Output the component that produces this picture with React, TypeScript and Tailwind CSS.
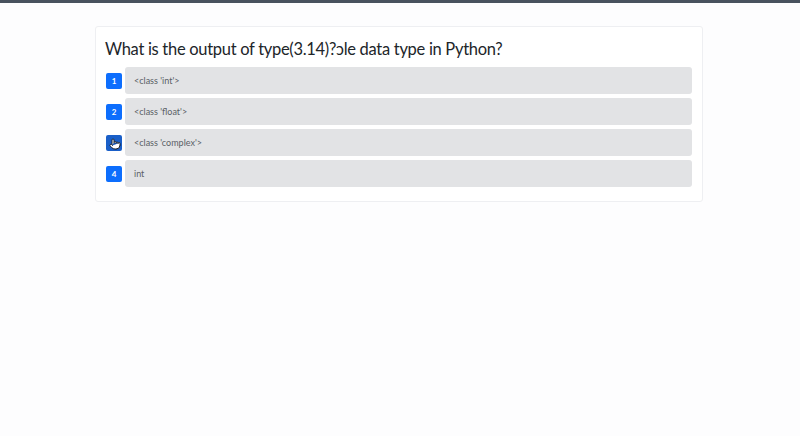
import { Pointer } from "lucide-react";

const options = [
  { n: 1, label: "<class 'int'>" },
  { n: 2, label: "<class 'float'>" },
  { n: 3, label: "<class 'complex'>" },
  { n: 4, label: "int" },
];

export default function App() {
  return (
    <div className="w-[800px] h-[436px] bg-[#fdfdfe] overflow-hidden" style={{ fontFamily: 'Lato, "Noto Sans", sans-serif' }}>
      <div className="h-[3px] bg-[#48525e]" />
      <div className="ml-[95px] mt-[23px] w-[608px] border border-[#eeeff2] rounded-[3px] bg-white pl-[9px] pr-[10px] pt-[8px] pb-[14px]">
        <h1 className="text-[16.5px] leading-[28px] tracking-[-0.3px] text-[#212529] mb-[4px]">
          What is the output of type(3.14)?ɔle data type in Python?
        </h1>
        <div className="flex flex-col gap-[4px]">
          {options.map((o) => (
            <div key={o.n} className="flex items-center">
              <div
                className={
                  "relative w-[16px] h-[16px] ml-[1px] mr-[3px] rounded-[2px] flex items-center justify-center text-white text-[8px] font-bold " +
                  (o.n === 3 ? "bg-[#1a5fc8]" : "bg-[#0d6efd]")
                }
              >
                {o.n === 3 ? (
                  <Pointer className="absolute left-[3px] top-[3px] w-[12px] h-[12px] fill-white text-[#1b2430]" strokeWidth={2} />
                ) : (
                  o.n
                )}
              </div>
              <div className="flex-1 h-[27px] rounded-[3px] bg-[#e2e3e5] flex items-center pl-[9px] text-[9px] text-[#5a5f66]">
                {o.label}
              </div>
            </div>
          ))}
        </div>
      </div>
    </div>
  );
}
